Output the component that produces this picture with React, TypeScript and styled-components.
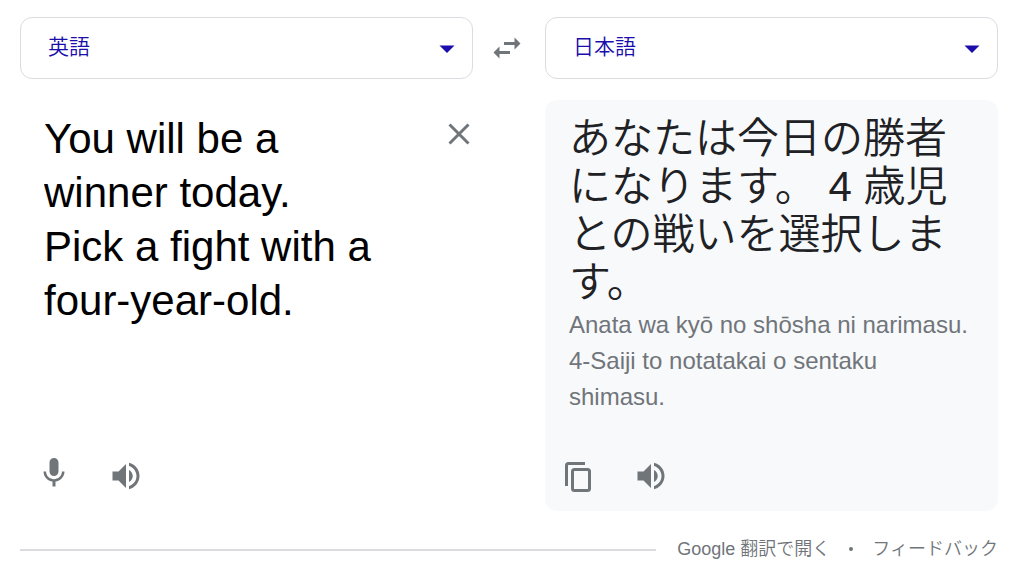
import React, { useState } from "react";
import styled, { createGlobalStyle } from "styled-components";

const GlobalStyle = createGlobalStyle`
  *, *::before, *::after { box-sizing: border-box; }
  body {
    margin: 0;
    background: #fff;
    color: #202124;
    font-family: "Liberation Sans", "Noto Sans CJK JP", sans-serif;
  }
`;

const Page = styled.main`
  display: flex;
  flex-direction: column;
  padding: 17px 24px 8px 20px;
`;

const Columns = styled.div`
  display: grid;
  grid-template-columns: minmax(0, 1fr) 72px minmax(0, 1fr);
  row-gap: 21px;
`;

const SelectBox = styled.div`
  position: relative;
  display: flex;
`;

const LanguageSelect = styled.select`
  appearance: none;
  width: 100%;
  height: 62px;
  padding: 0 64px 4px 27px;
  border: 1px solid #dadce0;
  border-radius: 12px;
  background: #fff;
  color: #1a0dab;
  font-family: inherit;
  font-size: 21px;
  font-weight: 350;
  cursor: pointer;
`;

const Caret = styled.svg`
  position: absolute;
  top: 28px;
  right: 18px;
  width: 16px;
  height: 8px;
  fill: #1a0dab;
  pointer-events: none;
`;

const IconButton = styled.button<{ $size?: number }>`
  display: flex;
  align-items: center;
  justify-content: center;
  flex: none;
  width: ${(p) => p.$size ?? 36}px;
  height: ${(p) => p.$size ?? 36}px;
  padding: 0;
  border: 0;
  background: none;
  color: #70757a;
  cursor: pointer;

  svg {
    width: 100%;
    height: 100%;
    fill: currentColor;
  }
`;

const SwapCell = styled.div`
  display: flex;
  align-items: center;
  padding-left: 16px;
`;

const Panel = styled.section<{ $filled?: boolean; $column?: number }>`
  grid-column: ${(p) => p.$column};
  display: flex;
  flex-direction: column;
  justify-content: space-between;
  min-height: 411px;
  padding-bottom: 17px;
  border-radius: 12px;
  background: ${(p) => (p.$filled ? "#f8f9fb" : "transparent")};
`;

const SourceRow = styled.div`
  display: flex;
  align-items: flex-start;
  justify-content: space-between;
  gap: 40px;
  padding: 12px 0 0 24px;

  button {
    margin-top: 8px;
  }
`;

const SourceText = styled.textarea`
  flex: 1;
  min-width: 0;
  height: 270px;
  padding: 0;
  border: 0;
  outline: none;
  resize: none;
  overflow: hidden;
  background: transparent;
  color: #000;
  font-family: inherit;
  font-size: 42px;
  line-height: 54px;
`;

const Result = styled.div`
  padding: 15px 24px 0;
`;

const Translation = styled.p`
  margin: 0;
  font-size: 42px;
  font-weight: 350;
  line-height: 48px;
`;

const Romanization = styled.p`
  margin: 0;
  color: #70757a;
  font-size: 24px;
  line-height: 36px;
`;

const Toolbar = styled.div`
  display: flex;
  gap: 36px;
  padding-left: 16px;
`;

const Footer = styled.footer`
  display: flex;
  align-items: center;
  margin-top: 24px;
  color: #70757a;
  font-size: 18px;
  font-weight: 350;
  line-height: 28px;
`;

const Rule = styled.hr`
  flex: 1;
  height: 2px;
  margin: 2px 21px 0 0;
  border: 0;
  background: #dadce0;
`;

const FooterLink = styled.a`
  color: inherit;
  text-decoration: none;
`;

const Dot = styled.span`
  width: 4px;
  height: 4px;
  margin: 0 19px;
  border-radius: 50%;
  background: #70757a;
`;

const SpeakerIcon = () => (
  <svg viewBox="0 0 24 24" aria-hidden="true">
    <path d="M3 9v6h4l5 5V4L7 9H3zm13.5 3c0-1.77-1.02-3.29-2.5-4.03v8.05c1.48-.73 2.5-2.25 2.5-4.02zM14 3.23v2.06c2.89.86 5 3.54 5 6.71s-2.11 5.85-5 6.71v2.06c4.01-.91 7-4.49 7-8.77s-2.99-7.86-7-8.77z" />
  </svg>
);

const MicIcon = () => (
  <svg viewBox="0 2 24 24" aria-hidden="true">
    <path d="M12 14c1.66 0 2.99-1.34 2.99-3L15 5c0-1.66-1.34-3-3-3S9 3.34 9 5v6c0 1.66 1.34 3 3 3zm5.3-3c0 3-2.54 5.1-5.3 5.1S6.7 14 6.7 11H5c0 3.41 2.72 6.23 6 6.72V21h2v-3.28c3.28-.48 6-3.3 6-6.72h-1.7z" />
  </svg>
);

const CopyIcon = () => (
  <svg viewBox="0 0 36 36" aria-hidden="true">
    <g fill="none" stroke="currentColor" strokeWidth="3">
      <path d="M24 5.5H7.5a2 2 0 0 0-2 2V28" />
      <rect x="11.5" y="11.5" width="17" height="21" rx="2" />
    </g>
  </svg>
);

const SwapIcon = () => (
  <svg viewBox="0 0 24 24" aria-hidden="true">
    <path d="M6.99 11L3 15l3.99 4v-3H14v-2H6.99v-3zM21 9l-3.99-4v3H10v2h7.01v3L21 9z" />
  </svg>
);

const CloseIcon = () => (
  <svg viewBox="0 0 28 28" aria-hidden="true">
    <path d="M4.5 4.5l19 19M23.5 4.5l-19 19" fill="none" stroke="currentColor" strokeWidth="3" />
  </svg>
);

const LANGUAGES = ["英語", "日本語"];

type LanguagePickerProps = {
  label: string;
  value: string;
  onChange: (value: string) => void;
};

const LanguagePicker = ({ label, value, onChange }: LanguagePickerProps) => (
  <SelectBox>
    <LanguageSelect aria-label={label} value={value} onChange={(e) => onChange(e.target.value)}>
      {LANGUAGES.map((language) => (
        <option key={language}>{language}</option>
      ))}
    </LanguageSelect>
    <Caret viewBox="0 0 16 8" aria-hidden="true">
      <path d="M0.5 0.5h15L8 8z" />
    </Caret>
  </SelectBox>
);

export default function App() {
  const [source, setSource] = useState("英語");
  const [target, setTarget] = useState("日本語");
  const [text, setText] = useState(
    "You will be a winner today.\nPick a fight with a four-year-old."
  );

  const swap = () => {
    setSource(target);
    setTarget(source);
  };

  return (
    <>
      <GlobalStyle />
      <Page lang="ja">
        <Columns>
          <LanguagePicker label="翻訳元の言語" value={source} onChange={setSource} />
          <SwapCell>
            <IconButton type="button" aria-label="言語を入れ替える" onClick={swap}>
              <SwapIcon />
            </IconButton>
          </SwapCell>
          <LanguagePicker label="翻訳先の言語" value={target} onChange={setTarget} />

          <Panel $column={1}>
            <SourceRow>
              <SourceText
                aria-label="原文"
                spellCheck={false}
                value={text}
                onChange={(e) => setText(e.target.value)}
              />
              <IconButton type="button" aria-label="消去" $size={28} onClick={() => setText("")}>
                <CloseIcon />
              </IconButton>
            </SourceRow>
            <Toolbar>
              <IconButton type="button" aria-label="音声入力">
                <MicIcon />
              </IconButton>
              <IconButton type="button" aria-label="原文を聞く">
                <SpeakerIcon />
              </IconButton>
            </Toolbar>
          </Panel>

          <Panel $column={3} $filled>
            <Result>
              <Translation>あなたは今日の勝者になります。 4 歳児との戦いを選択します。</Translation>
              <Romanization lang="ja-Latn">
                Anata wa kyō no shōsha ni narimasu. 4-Saiji to notatakai o sentaku shimasu.
              </Romanization>
            </Result>
            <Toolbar>
              <IconButton type="button" aria-label="コピー">
                <CopyIcon />
              </IconButton>
              <IconButton type="button" aria-label="訳文を聞く">
                <SpeakerIcon />
              </IconButton>
            </Toolbar>
          </Panel>
        </Columns>

        <Footer>
          <Rule />
          <FooterLink href="#translate">Google 翻訳で開く</FooterLink>
          <Dot />
          <FooterLink href="#feedback">フィードバック</FooterLink>
        </Footer>
      </Page>
    </>
  );
}
